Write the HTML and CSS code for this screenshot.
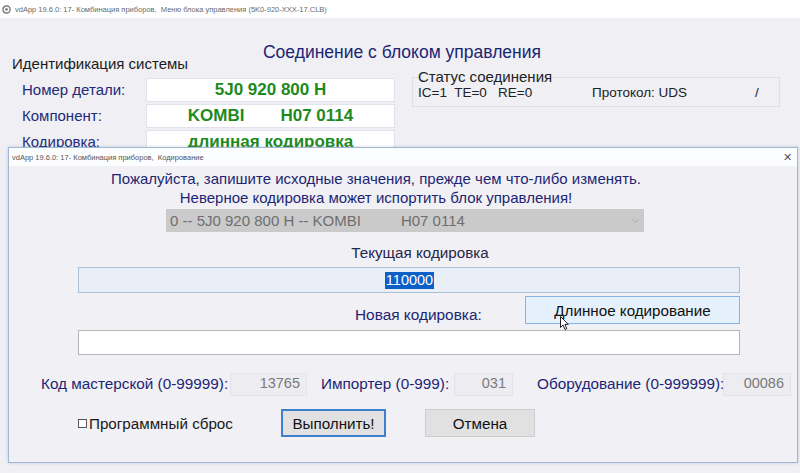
FILE: index.html
```html
<!DOCTYPE html>
<html lang="ru">
<head>
<meta charset="utf-8">
<title>vdApp</title>
<link rel="stylesheet" href="styles.css">
</head>
<body>
<div class="screen">
  <div class="win">
    <div class="titlebar">
      <svg class="app-icon" width="9" height="9" viewBox="0 0 9 9"><circle cx="4.5" cy="4.5" r="3.6" fill="none" stroke="#666" stroke-width="1.2"/><circle cx="4.5" cy="4.5" r="1.4" fill="#888"/></svg>
      <span>vdApp 19.6.0: 17- Комбинация приборов,&nbsp; Меню блока управления (5K0-920-XXX-17.CLB)</span>
    </div>
    <div class="main">
      <h1 class="conn-title">Соединение с блоком управления</h1>
      <div class="main-row">
        <div class="ident">
          <div class="ident-title">Идентификация системы</div>
          <div class="id-grid">
            <div class="id-label">Номер детали:</div>
            <div class="id-value">5J0 920 800 H</div>
            <div class="id-label">Компонент:</div>
            <div class="id-value"><span class="gap-r">KOMBI</span>H07 0114</div>
            <div class="id-label">Кодировка:</div>
            <div class="id-value">длинная кодировка</div>
          </div>
        </div>
        <fieldset class="status">
          <legend>Статус соединения</legend>
          <div class="status-line">
            <span class="st-a">IC=1&nbsp; TE=0&nbsp;&nbsp; RE=0</span>
            <span class="st-b">Протокол: UDS</span>
            <span class="st-c">/</span>
          </div>
        </fieldset>
      </div>
    </div>
  </div>

  <div class="dialog">
    <div class="dlg-title">
      <span>vdApp 19.6.0: 17- Комбинация приборов,&nbsp; Кодирование</span>
      <span class="close">✕</span>
    </div>
    <div class="dlg-body">
      <p class="warn warn1">Пожалуйста, запишите исходные значения, прежде чем что-либо изменять.</p>
      <p class="warn warn2">Неверное кодировка может испортить блок управления!</p>
      <div class="combo">
        <span>0 -- 5J0 920 800 H -- KOMBI<span class="combo-gap"></span>H07 0114</span>
        <svg class="combo-arrow" width="7" height="4" viewBox="0 0 7 4"><path d="M0.5 0.5 L3.5 3.5 L6.5 0.5" fill="none" stroke="#aaa" stroke-width="1"/></svg>
      </div>
      <div class="cur-label">Текущая кодировка</div>
      <div class="cur-input"><span class="sel">110000</span></div>
      <div class="new-row">
        <span class="new-label">Новая кодировка:</span>
        <button class="btn btn-long">Длинное кодирование</button>
      </div>
      <div class="new-input"></div>
      <div class="fields">
        <span class="f-label f1">Код мастерской (0-99999):</span>
        <span class="f-input fi1">13765</span>
        <span class="f-label f2">Импортер (0-999):</span>
        <span class="f-input fi2">031</span>
        <span class="f-label f3">Оборудование (0-999999):</span>
        <span class="f-input fi3">00086</span>
      </div>
      <div class="actions">
        <label class="check"><span class="box"></span>Программный сброс</label>
        <button class="btn btn-run">Выполнить!</button>
        <button class="btn btn-cancel">Отмена</button>
      </div>
    </div>
  </div>

  <svg class="cursor" width="10" height="15" viewBox="0 0 10 15"><path d="M0.5 0.5 L0.5 11.5 L3 9 L5 13.5 L6.8 12.7 L4.9 8.4 L8.3 8.4 Z" fill="#fff" stroke="#222" stroke-width="1"/></svg>
</div>
</body>
</html>
```
FILE: styles.css
```css
* { box-sizing: border-box; }
html, body { margin: 0; padding: 0; }
body {
  width: 800px;
  height: 473px;
  overflow: hidden;
  font-family: "Liberation Sans", Arial, sans-serif;
  background: #eeeef3;
}
.screen { position: relative; width: 800px; height: 473px; }

.win { width: 800px; height: 473px; background: #efeff4; }
.titlebar {
  height: 18px;
  background: #ffffff;
  display: flex;
  align-items: center;
  padding-left: 2px;
  font-size: 7.5px;
  color: #6a6a6a;
}
.app-icon { margin-right: 4px; }

.main { display: flex; flex-direction: column; }
.conn-title {
  margin: 23px 0 0 0;
  font-weight: normal;
  font-size: 17.5px;
  line-height: 22px;
  color: #1b2573;
  text-align: center;
  padding-left: 4px;
}
.main-row { display: flex; margin-top: -8px; }
.ident { padding-left: 12px; width: 395px; }
.ident-title { font-size: 15px; line-height: 17px; color: #1b1b1b; }
.id-grid {
  display: grid;
  grid-template-columns: 124px 249px;
  row-gap: 2px;
  margin-top: 6px;
  padding-left: 10px;
}
.id-label { font-size: 15px; line-height: 24px; color: #1d2a78; }
.id-value {
  height: 24px;
  background: #fff;
  border: 1px solid #e2e2ea;
  font-size: 17px;
  font-weight: bold;
  color: #1e8a1e;
  text-align: center;
  line-height: 22px;
}
.gap-r { margin-right: 36px; }

.status {
  margin: 14px 0 0 17px;
  width: 368px;
  height: 38px;
  border: 1px solid #dedee6;
  padding: 0 0 0 5px;
}
.status legend {
  font-size: 15px;
  line-height: 16px;
  color: #222;
  padding: 0;
  margin-left: 0;
}
.status-line { display: flex; font-size: 13.5px; color: #222; line-height: 16px; }
.st-a { width: 174px; }
.st-b { width: 163px; }

.dialog {
  position: absolute;
  left: 8px;
  top: 147px;
  width: 790px;
  height: 316px;
  border: 1px solid #9fb8d4;
  background: #f0f0f5;
  box-shadow: 0 0 3px rgba(120,140,170,0.35);
  display: flex;
  flex-direction: column;
}
.dlg-title {
  height: 18px;
  background: #fcfdff;
  display: flex;
  align-items: center;
  justify-content: space-between;
  padding: 0 5px 0 3px;
  font-size: 7.5px;
  color: #555;
}
.close { font-size: 11px; color: #555; }

.dlg-body { display: flex; flex-direction: column; }
.warn {
  margin: 0;
  font-size: 15px;
  line-height: 19px;
  color: #1e2673;
  text-align: center;
  padding-right: 54px;
}
.warn1 { margin-top: 3px; }
.combo {
  margin: 2px 0 0 157px;
  width: 478px;
  height: 23px;
  background: #cacaca;
  display: flex;
  align-items: center;
  justify-content: space-between;
  padding: 0 5px 0 4px;
  font-size: 15px;
  color: #6e6e6e;
}
.combo-gap { display: inline-block; width: 40px; }
.cur-label {
  margin-top: 12px;
  text-align: center;
  padding-left: 34px;
  font-size: 15.2px;
  line-height: 17px;
  color: #26264a;
}
.cur-input {
  margin: 6px 0 0 69px;
  width: 662px;
  height: 26px;
  background: #e9eef7;
  border: 1px solid #a9c0d9;
  display: flex;
  align-items: center;
  justify-content: center;
  padding-left: 1px;
  font-size: 14.5px;
}
.sel { background: #0b5fc6; color: #fff; padding: 0 1px; line-height: 17px; }
.new-row { display: flex; align-items: flex-end; margin-top: 3px; height: 28px; }
.new-label {
  margin-left: 346px;
  width: 170px;
  font-size: 15.4px;
  line-height: 17px;
  color: #1e2673;
  margin-bottom: 1px;
}
.btn {
  font-family: "Liberation Sans", Arial, sans-serif;
  font-size: 15.2px;
  color: #111;
  background: #e1e1e1;
  border: 1px solid #cdcdcd;
  padding: 0;
  cursor: default;
}
.btn-long {
  width: 215px;
  height: 28px;
  background: #e4f0fb;
  border-color: #86b5e2;
}
.new-input {
  margin: 6px 0 0 69px;
  width: 662px;
  height: 25px;
  background: #fff;
  border: 1px solid #b5b5b9;
}
.fields { display: flex; align-items: center; margin-top: 17px; height: 24px; }
.f-label { font-size: 15.3px; color: #1e2673; white-space: nowrap; flex: none; }
.f1 { margin-left: 32px; width: 189px; }
.f2 { margin-left: 14px; width: 133px; }
.f3 { margin-left: 24px; width: 186px; }
.f-input {
  flex: none;
  height: 23px;
  background: #ececf1;
  border: 1px solid #e3e3e9;
  font-size: 14.5px;
  color: #7a7a7a;
  text-align: right;
  line-height: 19px;
  padding-right: 6px;
}
.fi1 { width: 77px; }
.fi2 { width: 59px; }
.fi3 { width: 68px; }

.actions { display: flex; align-items: center; margin-top: 13px; height: 28px; }
.check {
  display: flex;
  align-items: center;
  margin-left: 69px;
  font-size: 15.2px;
  color: #1a1a1a;
  width: 203px;
}
.box {
  width: 9px;
  height: 9px;
  border: 1px solid #555;
  background: #fff;
  margin-right: 2px;
}
.btn-run { width: 105px; height: 28px; border: 2px solid #3c80cf; }
.btn-cancel { width: 110px; height: 28px; margin-left: 39px; }

.cursor { position: absolute; left: 560px; top: 316px; }
```
